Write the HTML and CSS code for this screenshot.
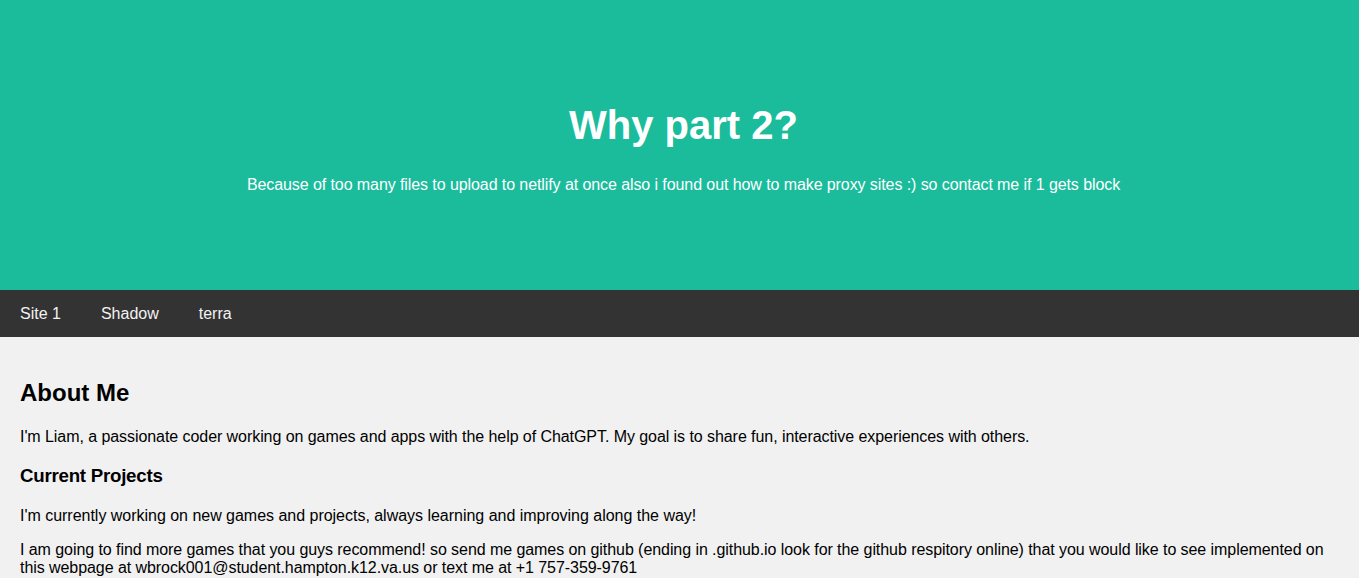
FILE: index.html
```html
<!DOCTYPE html>
<html lang="en">
<head>
<meta charset="utf-8">
<title>Why part 2?</title>
<link rel="stylesheet" href="styles.css">
</head>
<body>
<header class="header">
  <h1 class="header-title">Why part 2?</h1>
  <p class="header-text">Because of too many files to upload to netlify at once also i found out how to make proxy sites :) so contact me if 1 gets block</p>
</header>
<nav class="topnav">
  <a class="topnav-link" href="#">Site 1</a>
  <a class="topnav-link" href="#">Shadow</a>
  <a class="topnav-link" href="#">terra</a>
</nav>
<main class="content">
  <h2 class="section-title">About Me</h2>
  <p class="text">I'm Liam, a passionate coder working on games and apps with the help of ChatGPT. My goal is to share fun, interactive experiences with others.</p>
  <h3 class="sub-title">Current Projects</h3>
  <p class="text text-loose">I'm currently working on new games and projects, always learning and improving along the way!</p>
  <p class="text">I am going to find more games that you guys recommend! so send me games on github (ending in .github.io look for the github respitory online) that you would like to see implemented on this webpage at wbrock001@student.hampton.k12.va.us or text me at +1 757-359-9761</p>
</main>
</body>
</html>
```

FILE: styles.css
```css
* {
  box-sizing: border-box;
}

html, body {
  margin: 0;
  padding: 0;
}

body {
  font-family: "Liberation Sans", Arial, sans-serif;
  background: #f1f1f1;
  color: #000;
}

.header {
  background: #1abc9c;
  color: #fff;
  text-align: center;
  padding: 80px 80px 80px 88px;
  height: 290px;
}

.header-title {
  font-size: 40px;
  font-weight: bold;
  margin: 23px 0 28px;
}

.header-text {
  font-size: 16px;
  letter-spacing: -0.085px;
  margin: 0;
}

.topnav {
  display: flex;
  background: #333;
}

.topnav-link {
  display: block;
  color: #f2f2f2;
  text-decoration: none;
  font-size: 16px;
  padding: 15px 20px 14px;
}

.content {
  background: #f1f1f1;
  padding: 20px;
}

.section-title {
  font-size: 24px;
  font-weight: bold;
  margin: 22px 0 21px;
}

.sub-title {
  font-size: 18.72px;
  font-weight: bold;
  letter-spacing: -0.25px;
  margin: 19px 0 20px;
}

.text {
  font-size: 16px;
  letter-spacing: -0.065px;
  margin: 16px 0;
}

.text-loose {
  letter-spacing: -0.02px;
}
```
